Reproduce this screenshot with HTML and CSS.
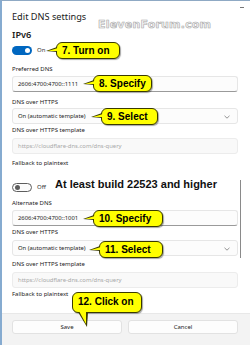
FILE: index.html
```html
<!DOCTYPE html>
<html lang="en">

<head>
    <meta charset="UTF-8">
    <title>Edit DNS settings</title>
    <link rel="stylesheet" href="styles.css">
</head>

<body>

    <div class="window">
        <div class="content">
            <div class="title">Edit DNS settings</div>
            <div class="watermark">ElevenForum.com</div>
            <div class="minimize"></div>

            <div class="heading">IPv6</div>
            <div class="toggle-row">
                <span class="toggle on"><span class="knob"></span></span>
                <span class="state">On</span>
            </div>

            <div class="label first">Preferred DNS</div>
            <div class="field input1">2606:4700:4700::1111</div>

            <div class="label doh1">DNS over HTTPS</div>
            <div class="field select drop1">On (automatic template)
                <svg class="chev" width="6" height="4" viewBox="0 0 6 4"><path d="M0.5 0.8 L3 3.2 L5.5 0.8" fill="none" stroke="#777" stroke-width="0.8"/></svg>
            </div>

            <div class="label tpl1">DNS over HTTPS template</div>
            <div class="field placeholder tplin1">https://cloudflare-dns.com/dns-query</div>

            <div class="label fb1">Fallback to plaintext</div>
            <div class="toggle-row off-row">
                <span class="toggle off"><span class="knob"></span></span>
                <span class="state">Off</span>
            </div>

            <div class="label alt">Alternate DNS</div>
            <div class="field input2">2606:4700:4700::1001</div>

            <div class="label doh2">DNS over HTTPS</div>
            <div class="field select drop2">On (automatic template)
                <svg class="chev" width="6" height="4" viewBox="0 0 6 4"><path d="M0.5 0.8 L3 3.2 L5.5 0.8" fill="none" stroke="#777" stroke-width="0.8"/></svg>
            </div>

            <div class="label tpl2">DNS over HTTPS template</div>
            <div class="field placeholder tplin2">https://cloudflare-dns.com/dns-query</div>

            <div class="label fb2">Fallback to plaintext</div>

            <div class="build-note">At least build 22523 and higher</div>
            <div class="scroll-thumb"></div>
        </div>

        <div class="footer">
            <button class="btn">Save</button>
            <button class="btn">Cancel</button>
        </div>

        <!-- annotation callouts -->
        <div class="callout c7">7. Turn on</div>
        <div class="callout c8">8. Specify</div>
        <div class="callout c9">9. Select</div>
        <div class="callout c10">10. Specify</div>
        <div class="callout c11">11. Select</div>
        <div class="callout down c12">12. Click on</div>
    </div>

</body>

</html>
```

FILE: styles.css
```css
body {
    margin: 0;
    background: #ffffff;
    font-family: "Noto Sans", "Open Sans", sans-serif;
    color: #1b1b1b;
}

.window {
    position: relative;
    width: 248px;
    height: 344px;
    border-top: 1px solid #8fa9c4;
    border-left: 2px solid #86abd0;
    overflow: hidden;
}

.content {
    position: relative;
    height: 312px;
    padding: 10px 0 0 10px;
    box-sizing: border-box;
    background: #ffffff;
}

.title {
    font-size: 9.2px;
    line-height: 12px;
}

.watermark {
    position: absolute;
    left: 96px;
    top: 17px;
    font-family: "DejaVu Sans", sans-serif;
    font-weight: bold;
    font-size: 11px;
    line-height: 14px;
    letter-spacing: 0.2px;
    color: #f4f4f4;
    -webkit-text-stroke: 0.6px #a9a9a9;
}

.minimize {
    position: absolute;
    left: 238px;
    top: 6px;
    width: 4px;
    height: 1px;
    background: #777;
}

.heading {
    margin-top: 6px;
    font-size: 9.2px;
    line-height: 12px;
    font-weight: 600;
}

.toggle-row {
    margin-top: 3px;
    height: 12px;
    display: flex;
    align-items: center;
    gap: 5px;
}

.toggle {
    position: relative;
    width: 20px;
    height: 9px;
    border-radius: 5px;
    box-sizing: border-box;
}

.toggle.on {
    background: #0067c0;
}

.toggle.off {
    border: 1px solid #5d5d5d;
    background: #fbfbfb;
}

.knob {
    position: absolute;
    top: 2px;
    width: 5px;
    height: 5px;
    border-radius: 50%;
}

.on .knob {
    right: 2px;
    background: #ffffff;
}

.off .knob {
    left: 2px;
    top: 1px;
    background: #5d5d5d;
}

.state {
    font-size: 6px;
    color: #333;
}

.label {
    font-size: 6px;
    line-height: 10px;
    color: #222;
}

.field {
    position: relative;
    width: 226px;
    height: 16px;
    box-sizing: border-box;
    padding-left: 5px;
    border: 1px solid #e6e6e6;
    border-radius: 3px;
    background: #fcfcfc;
    font-size: 5.9px;
    line-height: 14px;
    color: #222;
}

.input1,
.input2 {
    border-bottom-color: #9a9a9a;
}

.placeholder {
    color: #a8a8a8;
    background: #f9f9f9;
    border-color: #ececec;
}

.select .chev {
    position: absolute;
    right: 7px;
    top: 6px;
}

.first { margin-top: 8px; }
.input1 { margin-top: 2px; }
.doh1 { margin-top: 5px; }
.drop1 { margin-top: 1px; }
.tpl1 { margin-top: 1px; }
.tplin1 { margin-top: 3px; }
.fb1 { margin-top: 4px; }
.off-row { margin-top: 13px; }
.alt { margin-top: 5px; }
.input2 { margin-top: 2px; }
.doh2 { margin-top: 1px; }
.drop2 { margin-top: 3px; }
.tpl2 { margin-top: 3px; }
.tplin2 { margin-top: 3px; }
.fb2 { margin-top: 1px; }

.build-note {
    position: absolute;
    left: 53px;
    top: 176px;
    font-family: "Liberation Sans", Arial, sans-serif;
    font-weight: bold;
    font-size: 11px;
    line-height: 14px;
    color: #111;
}

.scroll-thumb {
    position: absolute;
    left: 238px;
    top: 179px;
    width: 1px;
    height: 78px;
    background: #8a8a8a;
}

.footer {
    height: 32px;
    background: #f3f3f3;
    border-top: 1px solid #e8e8e8;
    box-sizing: border-box;
    display: flex;
    gap: 6px;
    padding: 6px 10px 0 10px;
}

.btn {
    width: 110px;
    height: 14px;
    padding: 0;
    border: 1px solid #e2e2e2;
    border-radius: 3px;
    background: #fdfdfd;
    font-family: "Noto Sans", sans-serif;
    font-size: 6px;
    color: #222;
}

.callout {
    position: absolute;
    height: 17px;
    box-sizing: border-box;
    padding: 0 5px;
    background: #ffff00;
    border: 1px solid #3a3a00;
    border-radius: 6px;
    box-shadow: 1px 1px 1px rgba(0, 0, 0, 0.35);
    font-family: "Liberation Sans", Arial, sans-serif;
    font-weight: bold;
    font-size: 10px;
    line-height: 15px;
    color: #000;
    white-space: nowrap;
}

.callout::before,
.callout::after {
    content: "";
    position: absolute;
    top: 50%;
    width: 0;
    height: 0;
    border-style: solid;
}

.callout::before {
    left: -11px;
    margin-top: -4px;
    border-width: 4px 11px 1px 0;
    border-color: transparent #3a3a00 transparent transparent;
}

.callout::after {
    left: -9px;
    margin-top: -3px;
    border-width: 3px 10px 0 0;
    border-color: transparent #ffff00 transparent transparent;
}

.c7 { left: 54px; top: 41px; width: 64px; }
.c8 { left: 91px; top: 74px; width: 59px; }
.c9 { left: 99px; top: 107px; width: 57px; }
.c10 { left: 91px; top: 209px; width: 70px; }
.c11 { left: 97px; top: 240px; width: 64px; }

.c12 {
    left: 70px;
    top: 291px;
    width: 70px;
    height: 21px;
    line-height: 17px;
}

.down::before {
    left: 5px;
    top: auto;
    bottom: -15px;
    margin: 0;
    border-width: 15px 1px 0 9px;
    border-color: #3a3a00 transparent transparent transparent;
}

.down::after {
    left: 6px;
    top: auto;
    bottom: -12px;
    margin: 0;
    border-width: 13px 0 0 7px;
    border-color: #ffff00 transparent transparent transparent;
}
```
